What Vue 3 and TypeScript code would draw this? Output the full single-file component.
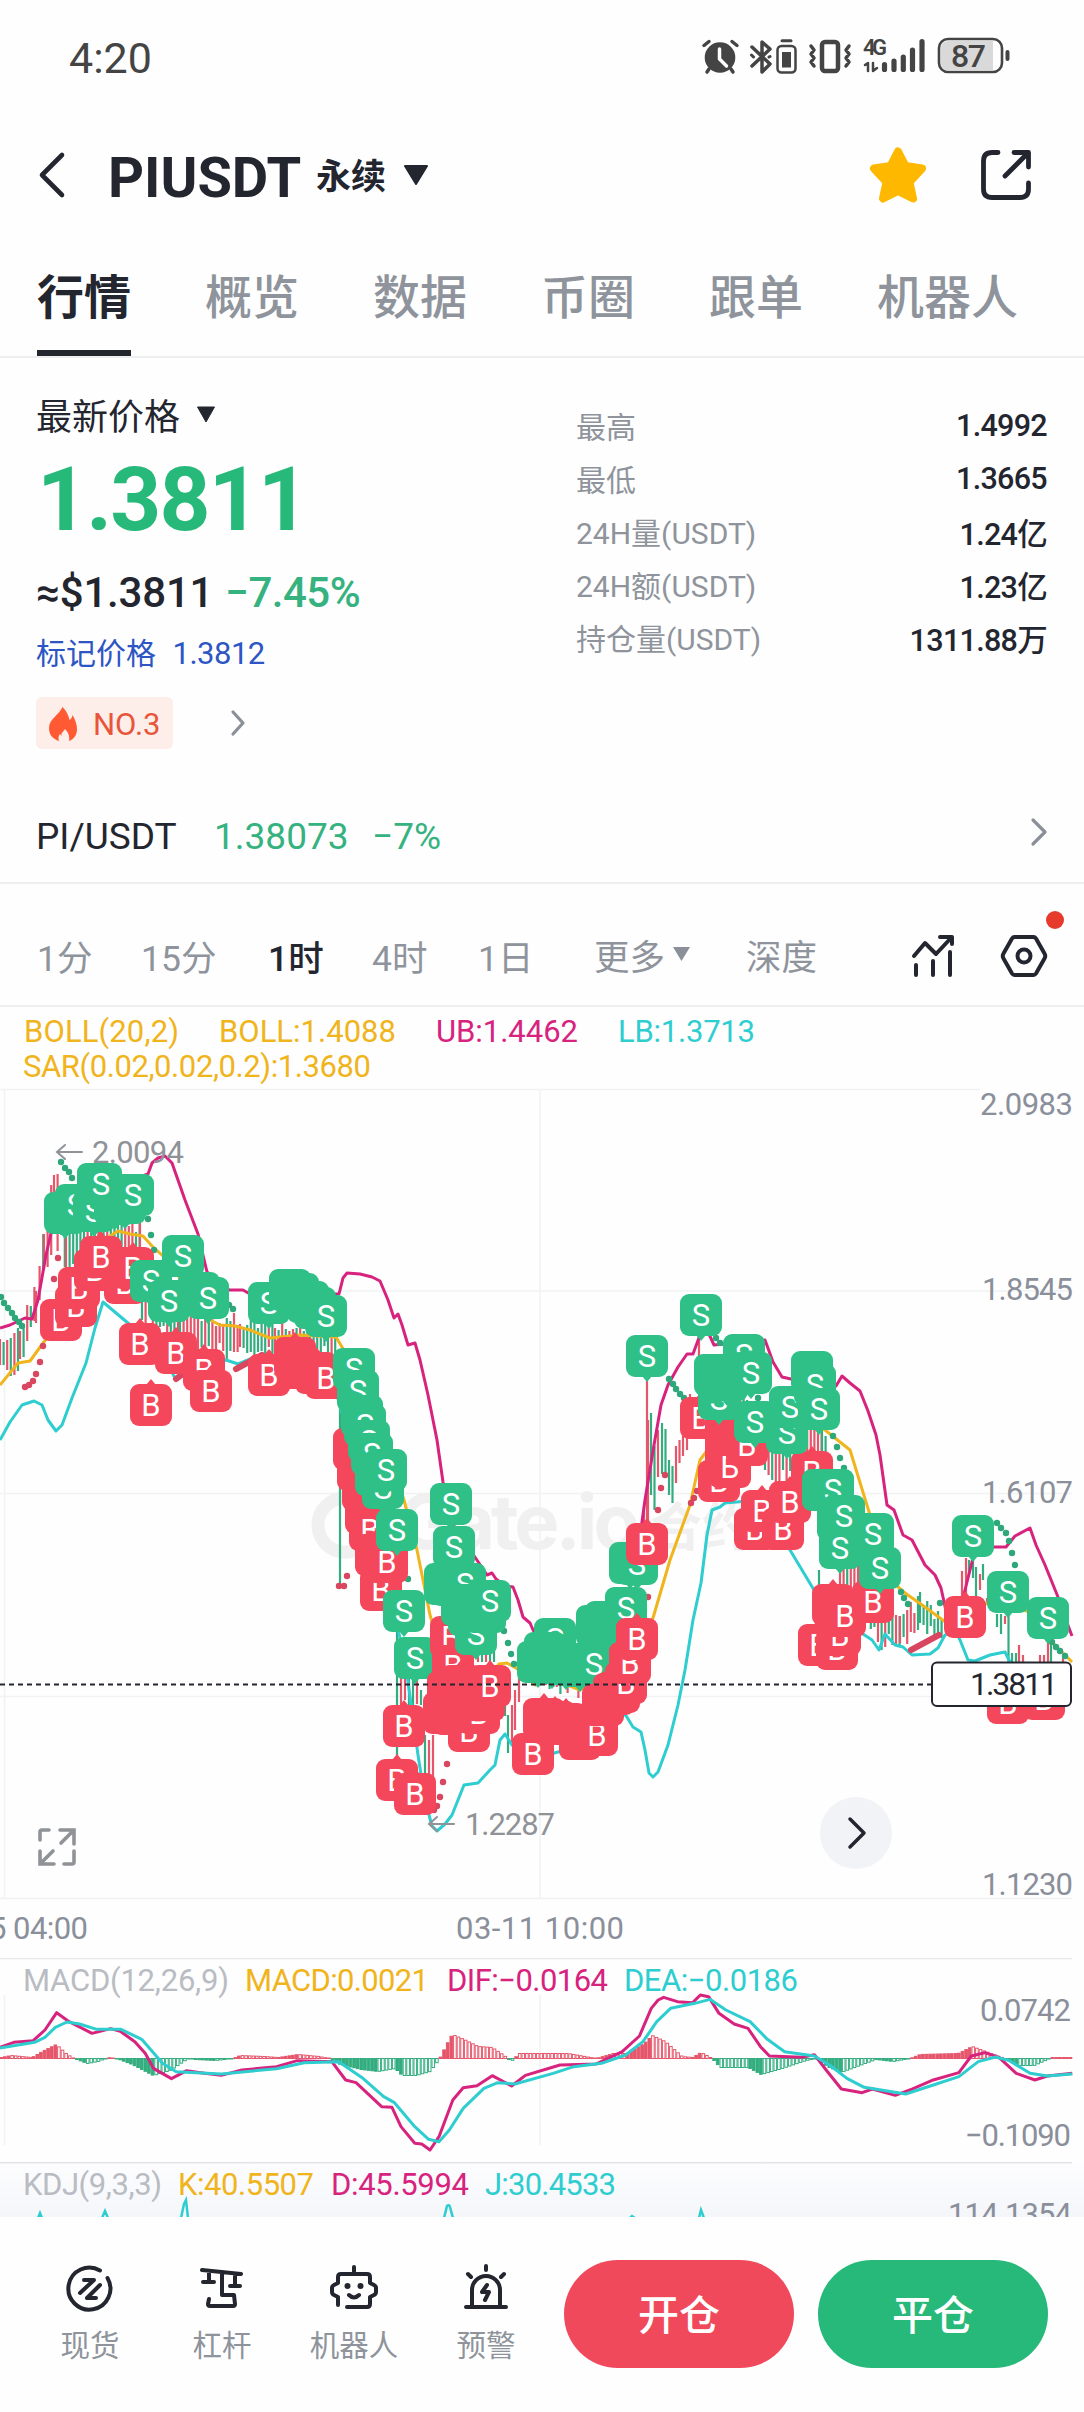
<template>
  <div class="page">
    <!-- 状态栏 -->
    <div class="status-bar">
      <span class="clock">4:20</span>
      <svg class="status-icons" viewBox="700 30 312 54" width="312" height="54">
        <g fill="none" stroke="#444" stroke-linecap="round" stroke-linejoin="round">
          <circle cx="720" cy="57.500" r="15.300" fill="#444" stroke="none" />
          <path d="M719.500 49v10l7 7" stroke="#fff" stroke-width="3.500" />
          <path d="M704 45.500l5-4M737 45.500l-5-4M709 69l-2 3M731 69l2 3" stroke-width="3.500" />
          <path d="M752 47l18 17-8 8V42l8 7-18 17" stroke-width="3.500" />
          <path d="M751.500 55l2 2M770 56.500l-1 .5" stroke-width="3" />
          <rect x="777.500" y="46" width="18" height="26.500" rx="4" stroke-width="2.500" />
          <rect x="782" y="52" width="9" height="15.500" fill="#444" stroke="none" />
          <path d="M782 40.800h9" stroke-width="3" />
          <rect x="822" y="42" width="16" height="29" rx="3" stroke-width="4.500" />
          <path d="M811 46l3 4-3 4 3 4-3 4 3 4M849 46l-3 4 3 4-3 4 3 4-3 4" stroke-width="3.500" />
          <path d="M868 71v-8l-3 2M873 63v8l4-3" stroke-width="2.500" />
          <path d="M884.500 64.500v5M894 61v8.500M903.300 57v12.500M912.500 50v19.500M922 41.500v28" stroke-width="5.200" />
          <rect x="939" y="39" width="63" height="33" rx="9" stroke-width="2.600" />
          <path d="M948 41h45v29.500h-45q-7 0-7-8v-13.500q0-8 7-8z" fill="#d9d9d9" stroke="none" />
          <path d="M1007.500 52v7" stroke-width="4" />
        </g>
        <text x="863" y="55" textLength="24" class="net-type">4G</text>
        <text x="951" y="67" textLength="35" class="battery">87</text>
      </svg>
    </div>

    <!-- 标题栏 -->
    <div class="nav-bar">
      <svg class="back" viewBox="0 0 30 48" width="30" height="48"><path d="M25 4L5 24l20 20" fill="none" stroke="#23262f" stroke-width="4.600" stroke-linecap="round" stroke-linejoin="round" /></svg>
      <h1>PIUSDT</h1>
      <span class="contract">永续</span>
      <svg class="tri-lg" viewBox="0 0 26 20" width="26" height="20"><path d="M2 1h22L13 19z" fill="#23262f" stroke="#23262f" stroke-width="2" stroke-linejoin="round" /></svg>
      <svg class="star" viewBox="0 0 58 56" width="58" height="56"><path d="M29 4.500l7.500 14.500 16.500 2.500-12.500 13.500 3.500 16.500-15-7.500-15 7.500 3.500-16.500L5 21.500 21.500 19z" fill="#ffb800" stroke="#ffb800" stroke-width="8" stroke-linejoin="round" /></svg>
      <svg class="share" viewBox="0 0 52 52" width="52" height="52"><path d="M18 3.500h-6q-8.500 0-8.500 8.500v28q0 8.500 8.500 8.500h28q8.500 0 8.500-8.500v-6M25 27L48 4M34 3.500h14.500V18" fill="none" stroke="#23262f" stroke-width="4.800" stroke-linecap="round" stroke-linejoin="round" /></svg>
    </div>

    <!-- 标签页 -->
    <div class="tabs">
      <div v-for="tab in tabs" :key="tab" :class="['tab', { active: tab === activeTab }]" @click="activeTab = tab">{{ tab }}</div>
    </div>

    <!-- 价格信息 -->
    <div class="summary">
      <div class="price-col">
        <div class="price-title">
          最新价格
          <svg viewBox="0 0 20 17" width="20" height="17"><path d="M1.500 1h17L10 16z" fill="#23262f" stroke="#23262f" stroke-linejoin="round" /></svg>
        </div>
        <div class="price">1.3811</div>
        <div class="price-usd"><span class="usd">≈$1.3811</span><span class="change">−7.45%</span></div>
        <div class="mark">标记价格 <span>1.3812</span></div>
        <div class="rank">
          <div class="badge">
            <svg viewBox="0 0 30 36" width="30" height="36"><path d="M14.500 1c4 4 6 8 7 13 2-1 2.500-3 3-5 3 5 4.500 10 4.500 14 0 6-3 10-8 12 1-5-1-9-4-12-1.500 3-4 3-3.500 7l-1.500-2c-1.500 2-2 4-1 7C5 33 1 29 1 22 1 13 11 9 14.500 1z" fill="#ff5a33" /></svg>
            <span>NO.3</span>
          </div>
          <svg viewBox="0 0 16 28" width="16" height="28"><path d="M3 3l10 11L3 25" fill="none" stroke="#8a8f98" stroke-width="3.200" stroke-linecap="round" stroke-linejoin="round" /></svg>
        </div>
      </div>
      <div class="stats">
        <div v-for="s in stats" :key="s.label" class="stat">
          <span class="stat-label">{{ s.label }}</span>
          <span class="stat-value">{{ s.value }}</span>
        </div>
      </div>
    </div>

    <div class="spot-row">
      <span class="pair">PI/USDT</span>
      <span class="spot-price">1.38073</span>
      <span class="spot-change">−7%</span>
      <svg viewBox="0 0 20 32" width="20" height="32"><path d="M4 4l12 12L4 28" fill="none" stroke="#8a8f98" stroke-width="3.200" stroke-linecap="round" stroke-linejoin="round" /></svg>
    </div>

    <!-- 周期选择 -->
    <div class="periods">
      <span class="period p1">1分</span>
      <span class="period p2">15分</span>
      <span class="period p3 active">1时</span>
      <span class="period p4">4时</span>
      <span class="period p5">1日</span>
      <span class="period p6">更多
        <svg viewBox="0 0 17 14" width="17" height="14"><path d="M0 0h17L8.500 14z" fill="#8a8f98" /></svg>
      </span>
      <span class="period p7">深度</span>
      <svg class="indicator" viewBox="0 0 44 44" width="44" height="44"><path d="M3 22L14 9l11 11L40 4M29 3h12v7M5 31v10M22 27v14M39 18v23" fill="none" stroke="#23262f" stroke-width="4" stroke-linecap="round" stroke-linejoin="round" /></svg>
      <div class="setting">
        <svg viewBox="0 0 48 44" width="48" height="44"><path d="M14.500 3h19q1.500 0 2.500 1.500l8.500 15q1.500 2.500 0 5l-8.500 15q-1 1.500-2.500 1.500h-19q-1.500 0-2.500-1.500l-8.500-15q-1.500-2.500 0-5l8.500-15q1-1.500 2.500-1.500z" fill="none" stroke="#23262f" stroke-width="4" /><circle cx="24" cy="22" r="6.500" fill="none" stroke="#23262f" stroke-width="4" /></svg>
        <i class="dot"></i>
      </div>
    </div>

    <!-- K线主图 -->
    <svg class="panel" viewBox="0 1007 1084 951" width="1084" height="951">
      <text v-for="t in mainLegend" :key="t.text" :x="t.x" :y="t.y" :textLength="t.w" :fill="t.color" class="legend">{{ t.text }}</text>
      <path d="M0 1089.500h980M0 1291h1072M0 1493.500h1072M0 1696.500h1072M0 1898.500h1072M4.500 1089v810M540 1089v810" class="grid" />

      <!-- 水印 -->
      <g class="watermark">
        <circle cx="345" cy="1525" r="27" fill="none" stroke="#f0f0f0" stroke-width="13" />
        <text x="398" y="1549" textLength="242" font-size="76">Gate.io</text>
        <text x="650" y="1546" textLength="104" font-size="52">合约</text>
      </g>

      <path v-for="(c, i) in candles" :key="'c' + i" :d="`M${c[0]} ${c[1]}V${c[2]}`" :stroke="c[3] ? GREEN : RED" stroke-width="2.200" />
      <polyline :points="lower" :stroke="CYAN" class="line" />
      <polyline :points="middle" :stroke="YELLOW" class="line" />
      <polyline :points="upper" :stroke="PINK" class="line" />
      <circle v-for="(d, i) in sarDown" :key="'d' + i" :cx="d[0]" :cy="d[1]" r="3.200" fill="#2ea77b" />
      <circle v-for="(d, i) in sarUp" :key="'u' + i" :cx="d[0]" :cy="d[1]" r="3.200" fill="#d8475f" />
      <path d="M236 1369L262 1355M176 1379l8-6M911 1650l28-15" stroke="#d8475f" stroke-width="6" stroke-linecap="round" />
      <g class="extreme">
        <path d="M82 1152H58M65 1145l-8 7 8 7M454 1824h-24M437 1817l-8 7 8 7" />
        <text x="92" y="1163" textLength="92">2.0094</text>
        <text x="465" y="1835" textLength="90">1.2287</text>
      </g>
      <!-- 买卖点 -->
      <g v-for="(m, i) in markers" :key="'m' + i" :fill="isSell(m) ? SELL : BUY">
        <path :d="isSell(m) ? `M${m[1] - 5} ${m[2] + 20}h10l-5 6z` : `M${m[1] - 5} ${m[2] - 20}h10l-5-6z`" />
        <rect :x="m[1] - 21" :y="m[2] - 21" width="42" height="42" rx="9" />
        <text v-if="m[0] === 'S' || m[0] === 'B'" :x="m[1]" :y="m[2] + 11" class="marker">{{ m[0] }}</text>
      </g>
      <path d="M0 1684.500H931" stroke="#23262f" stroke-width="1.800" stroke-dasharray="5 4" />
      <rect x="932" y="1662.500" width="139" height="43.500" rx="5" fill="#fff" stroke="#23262f" stroke-width="2" />
      <text x="970" y="1695" textLength="88" class="cur">1.3811</text>

      <text v-for="t in scale" :key="t.text" :x="1073 - t.w" :y="t.y" :textLength="t.w" class="axis">{{ t.text }}</text>
      <text x="-11" y="1939" textLength="99" class="axis">5 04:00</text>
      <text x="456" y="1939" textLength="168" class="axis">03-11 10:00</text>
      <path d="M40 1840v-8q0-2 2-2h7M60 1830h14v14M73 1831l-12 12M40 1851v13h14M41 1863l12-12M74 1851v11q0 2-2 2h-8" class="expand" />
      <circle cx="856" cy="1833" r="36" fill="#f1f3f7" />
      <path d="M850 1819l14 14-14 14" fill="none" stroke="#23262f" stroke-width="3.500" stroke-linecap="round" stroke-linejoin="round" />
    </svg>

    <!-- MACD -->
    <svg class="panel" viewBox="0 1958 1084 204" width="1084" height="204">
      <path d="M0 1958.500h1072" stroke="#e6e7ea" stroke-width="1.500" />
      <path d="M4.500 1995v150M540 1995v150" class="grid" />
      <text v-for="t in macdLegend" :key="t.text" :x="t.x" y="1991" :textLength="t.w" :fill="t.color" class="legend">{{ t.text }}</text>
      <path d="M0 2058.500h1072" stroke="#e58a98" stroke-width=".8" />
      <rect v-for="(b, i) in bars" :key="i" :x="b.x" :y="b.y" :width="2.600" :height="b.h" :stroke="b.up ? RED : GREEN" :fill="b.solid ? (b.up ? RED : GREEN) : '#fff'" />
      <g transform="translate(0 1950) scale(.69133 .33333)">
        <polyline :points="dif" :stroke="PINK" class="line" />
        <polyline :points="dea" :stroke="CYAN" class="line" />
      </g>
      <text x="980" y="2021" textLength="91" class="axis">0.0742</text>
      <text x="965" y="2146" textLength="106" class="axis">−0.1090</text>
    </svg>

    <!-- KDJ -->
    <svg class="panel kdj" viewBox="0 2162 1084 55" width="1084" height="55">
      <path d="M0 2162.700h1072" stroke="#e1e3e6" stroke-width="1.500" />
      <text v-for="t in kdjLegend" :key="t.text" :x="t.x" y="2195" :textLength="t.w" :fill="t.color" class="legend">{{ t.text }}</text>
      <path d="M38 2218l2-5 2 5M102 2218l3-7 3 7M181 2218l3-14 2-4 2 18M444 2218l3-12q2-2 3 1l3 11M630 2218l2-2 3 2M699 2218l2-8 3 8" fill="none" :stroke="CYAN" stroke-width="2.500" />
      <text x="948" y="2225" textLength="124" class="axis">114.1354</text>
    </svg>

    <!-- 底部操作栏 -->
    <div class="bottom-bar">
      <div class="action">
        <svg viewBox="0 0 48 48" width="48" height="48"><path d="M34 5.500A21 21 0 1 0 41.500 13M18 15h10L14 28M34 20L21 33h9" transform="translate(0 1)" /></svg>
        现货
      </div>
      <div class="action">
        <svg viewBox="0 0 48 48" width="48" height="48"><path d="M4 6l39 4M11 7v11M5 18h11M24 8v23h12l1 9q0 2-2 2H12q-2 0-2-2l1-5M37 10v12M32 22h10" /></svg>
        杠杆
      </div>
      <div class="action">
        <svg viewBox="0 0 48 48" width="48" height="48"><path d="M24 3v7M8 41v-8l-4-2q-2-1-2-3v-4q0-2 2-3l4-2v-6q0-3 3-3h26q3 0 3 3v6l4 2q2 1 2 3v4q0 2-2 3l-4 2v7q0 3-3 3H17M19 31q5 5 10 0" /><circle cx="17.500" cy="22" r="3" /><circle cx="30.500" cy="22" r="3" /></svg>
        机器人
      </div>
      <div class="action">
        <svg viewBox="0 0 48 48" width="48" height="48"><path d="M4 43h40M10 43V26a14 14 0 0 1 28 0v17M24 2v4M6 10l3 3M42 10l-3 3M25 21l-5 7h7l-4 8" /></svg>
        预警
      </div>
      <button class="trade open">开仓</button>
      <button class="trade close">平仓</button>
    </div>
  </div>
</template>

<script setup lang="ts">
import { ref } from 'vue';

const RED = '#e5566b';
const GREEN = '#33ad7f';
const SELL = '#2fc088';
const BUY = '#f5475c';
const PINK = '#d7237e';
const CYAN = '#2ecdd0';
const YELLOW = '#f0b41c';
const GRAY = '#b9bcc3';

interface Label {
  text: string;
  x: number;
  y?: number;
  w: number;
  color: string;
}

// 小写表示被遮挡、不显示字母的标记
type Marker = ['S' | 'B' | 's' | 'b', number, number];
type Candle = [number, number, number, number];

const tabs = ['行情', '概览', '数据', '币圈', '跟单', '机器人'];
const activeTab = ref('行情');

const stats = [
  { label: '最高', value: '1.4992' },
  { label: '最低', value: '1.3665' },
  { label: '24H量(USDT)', value: '1.24亿' },
  { label: '24H额(USDT)', value: '1.23亿' },
  { label: '持仓量(USDT)', value: '1311.88万' }
];

const mainLegend: Label[] = [
  { text: 'BOLL(20,2)', x: 24, y: 1042, w: 155, color: YELLOW },
  { text: 'BOLL:1.4088', x: 219, y: 1042, w: 177, color: YELLOW },
  { text: 'UB:1.4462', x: 436, y: 1042, w: 142, color: PINK },
  { text: 'LB:1.3713', x: 618, y: 1042, w: 137, color: CYAN },
  { text: 'SAR(0.02,0.02,0.2):1.3680', x: 23, y: 1077, w: 348, color: YELLOW }
];

const macdLegend: Label[] = [
  { text: 'MACD(12,26,9)', x: 23, w: 206, color: GRAY },
  { text: 'MACD:0.0021', x: 245, w: 184, color: YELLOW },
  { text: 'DIF:−0.0164', x: 447, w: 161, color: PINK },
  { text: 'DEA:−0.0186', x: 624, w: 174, color: CYAN }
];

const kdjLegend: Label[] = [
  { text: 'KDJ(9,3,3)', x: 23, w: 139, color: GRAY },
  { text: 'K:40.5507', x: 178, w: 136, color: YELLOW },
  { text: 'D:45.5994', x: 331, w: 138, color: PINK },
  { text: 'J:30.4533', x: 485, w: 131, color: CYAN }
];

const scale = [
  { text: '2.0983', y: 1115, w: 93 },
  { text: '1.8545', y: 1300, w: 91 },
  { text: '1.6107', y: 1503, w: 91 },
  { text: '1.1230', y: 1895, w: 91 }
];

// 布林带
const upper = '0,1328 10,1325 25,1318 32,1319 38,1300 46,1255 54,1220 90,1195 148,1174 152,1163 158,1158 165,1156 172,1163 185,1200 198,1234 207,1272 229,1290 243,1290 250,1294 339,1294 343,1278 347,1273 360,1274 372,1277 380,1281 388,1300 394,1318 398,1314 402,1325 408,1345 415,1343 420,1360 428,1395 437,1440 443,1482 450,1520 487,1575 492,1573 496,1579 505,1586 513,1587 518,1600 523,1617 530,1623 534,1632 600,1640 634,1580 645,1500 654,1445 661,1405 668,1385 678,1367 687,1354 693,1354 700,1335 708,1332 714,1345 765,1340 773,1362 782,1377 791,1379 836,1386 842,1376 850,1383 860,1391 868,1411 876,1435 880,1455 887,1505 894,1510 903,1535 912,1540 925,1565 935,1575 941,1588 948,1620 960,1610 975,1550 994,1547 1006,1547 1015,1536 1030,1528 1036,1545 1045,1565 1058,1597 1066,1620 1072,1636';
const middle = '0,1385 18,1363 30,1361 38,1350 60,1320 110,1236 118,1231 130,1234 143,1236 152,1246 163,1256 185,1285 212,1321 220,1325 235,1326 250,1330 270,1338 300,1335 336,1337 345,1352 370,1400 404,1500 417,1550 430,1615 450,1680 480,1690 499,1664 507,1663 516,1668 535,1685 555,1680 580,1690 610,1670 653,1618 670,1560 690,1505 700,1460 730,1420 800,1410 850,1450 890,1580 905,1593 925,1607 944,1621 970,1610 990,1602 1027,1611 1050,1640 1072,1662';
const lower = '0,1440 10,1422 22,1405 34,1401 42,1405 48,1420 56,1431 62,1425 72,1398 86,1363 95,1328 103,1302 160,1350 175,1378 190,1372 226,1360 238,1364 260,1355 330,1370 380,1550 405,1660 418,1755 425,1800 432,1826 437,1831 445,1824 452,1815 458,1800 464,1785 478,1783 490,1770 495,1765 500,1740 505,1734 512,1745 530,1760 600,1740 625,1714 633,1727 641,1732 645,1750 649,1773 653,1777 658,1772 668,1745 678,1705 685,1670 693,1620 701,1583 707,1535 712,1510 720,1507 725,1503 760,1500 820,1600 863,1634 872,1640 879,1650 885,1634 895,1645 903,1647 912,1655 930,1654 938,1648 945,1635 955,1630 960,1640 968,1660 975,1661 990,1655 1005,1652 1010,1662';

// 抛物线指标
const sarDown = [
  [1, 1297], [4, 1303], [8, 1308], [12, 1313], [15, 1318], [19, 1322], [22, 1326],
  [61, 1162], [65, 1168], [69, 1172], [72, 1178], [148, 1219], [151, 1235], [154, 1250],
  [229, 1305], [233, 1309], [408, 1579], [504, 1631], [508, 1643], [511, 1654], [514, 1664],
  [669, 1379], [673, 1384], [676, 1389], [680, 1394], [684, 1398], [716, 1338], [720, 1343],
  [758, 1398], [833, 1436], [837, 1447], [840, 1458], [844, 1468], [901, 1592], [904, 1598],
  [908, 1604], [940, 1603], [997, 1523], [1001, 1528], [1006, 1533], [1009, 1541],
  [1012, 1553], [1015, 1565], [1052, 1642], [1056, 1647], [1060, 1651], [1065, 1656]
];
const sarUp = [
  [25, 1387], [29, 1385], [33, 1381], [36, 1374], [40, 1362], [43, 1346], [54, 1279],
  [58, 1258], [339, 1586], [344, 1586], [347, 1576], [434, 1810], [437, 1806], [440, 1797],
  [443, 1782], [447, 1764], [648, 1597], [658, 1510], [661, 1488], [665, 1475],
  [691, 1503], [694, 1498], [697, 1491]
];

// 走势中线与波幅: [x, y, 半幅]
const trend = [
  [0, 1358, 22], [20, 1345, 24], [36, 1305, 18], [44, 1250, 36], [54, 1200, 42],
  [66, 1235, 32], [100, 1240, 28], [140, 1240, 24], [142, 1300, 24], [180, 1320, 24],
  [216, 1338, 20], [240, 1336, 18], [275, 1340, 22], [310, 1340, 16], [338, 1345, 13]
];
const trend2 = [
  [546, 1676, 18], [604, 1672, 18]
];
const trend3 = [
  [740, 1400, 12], [765, 1450, 30], [800, 1455, 26], [822, 1440, 22], [840, 1560, 32],
  [860, 1575, 28], [878, 1625, 24], [900, 1630, 17], [920, 1612, 17], [944, 1628, 12]
];

function buildCandles(path: number[][], seed: number): Candle[] {
  const out: Candle[] = [];
  let s = seed;
  const rnd = () => {
    s = (s * 16807) % 2147483647;
    return s / 2147483647;
  };
  for (let i = 1; i < path.length; i++) {
    const [x0, y0, r0] = path[i - 1];
    const [x1, y1, r1] = path[i];
    for (let x = x0; x < x1; x += 3.6) {
      const k = (x - x0) / (x1 - x0);
      const y = y0 + (y1 - y0) * k + (rnd() - 0.5) * 12;
      const r = (r0 + (r1 - r0) * k) * (0.5 + rnd() * 0.6);
      out.push([+x.toFixed(1), Math.round(y - r), Math.round(y + r), rnd() > 0.5 ? 1 : 0]);
    }
  }
  return out;
}

const candles: Candle[] = [
  ...buildCandles(trend, 77),
  ...buildCandles(trend2, 12),
  ...buildCandles(trend3, 35),
  [340, 1400, 1585, 1], [397, 1630, 1755, 1], [401, 1670, 1705, 0], [405, 1670, 1700, 0],
  [409, 1670, 1712, 1], [413, 1670, 1715, 1], [417, 1680, 1704, 0], [421, 1690, 1705, 1],
  [425, 1735, 1775, 1], [429, 1740, 1775, 0], [433, 1735, 1780, 0], [478, 1655, 1662, 0],
  [482, 1654, 1662, 1], [486, 1654, 1662, 0], [490, 1652, 1662, 1], [494, 1645, 1662, 1],
  [505, 1700, 1716, 1], [508, 1715, 1753, 1], [512, 1705, 1742, 0], [515, 1690, 1730, 0], [519, 1678, 1702, 0],
  [644, 1505, 1530, 0], [647, 1380, 1525, 0], [648, 1420, 1525, 0], [651, 1413, 1495, 1], [654.5, 1446, 1510, 1],
  [658, 1430, 1477, 0], [662, 1423, 1474, 1], [665.5, 1429, 1472, 1], [669, 1460, 1495, 1],
  [672.5, 1466, 1503, 1], [676, 1446, 1483, 0], [679.5, 1440, 1463, 0], [683, 1432, 1456, 0],
  [687, 1420, 1450, 0], [690, 1394, 1425, 0], [699, 1336, 1360, 0], [819, 1570, 1592, 1],
  [962, 1571, 1600, 0], [966, 1558, 1598, 0], [969, 1560, 1575, 1], [973, 1560, 1578, 1],
  [976, 1567, 1596, 1], [980, 1574, 1590, 0], [983, 1564, 1580, 1], [987, 1598, 1604, 0],
  [997, 1614, 1627, 1], [1001, 1614, 1634, 1], [1005, 1616, 1624, 0], [1008.5, 1610, 1663, 1],
  [1012, 1653, 1663, 1], [1016, 1653, 1663, 1], [1019, 1645, 1663, 0], [1023, 1655, 1663, 0],
  [1040, 1655, 1663, 0], [1044, 1655, 1663, 0], [1048, 1642, 1663, 0], [1051, 1642, 1663, 1], [1063, 1658, 1663, 0]
];

// 买卖标记，后绘制的覆盖在上层
const markers: Marker[] = [
  ['B', 61, 1320], ['B', 76, 1306], ['B', 79, 1288], ['B', 95, 1270], ['B', 125, 1283], ['B', 133, 1268], ['B', 101, 1257],
  ['s', 65, 1213], ['S', 76, 1205], ['S', 94, 1211], ['s', 115, 1204], ['s', 98, 1184], ['s', 125, 1203], ['S', 101, 1184], ['S', 133, 1195],
  ['B', 140, 1344], ['B', 151, 1405], ['B', 176, 1353], ['B', 204, 1370], ['B', 211, 1391],
  ['S', 151, 1281], ['S', 183, 1256], ['s', 199, 1293], ['S', 169, 1301], ['S', 208, 1298],
  ['B', 269, 1375], ['b', 295, 1358], ['b', 300, 1368], ['b', 316, 1373], ['B', 326, 1378],
  ['S', 269, 1303], ['s', 290, 1290], ['s', 298, 1294], ['s', 308, 1302], ['s', 315, 1308], ['S', 326, 1316],
  ['b', 354, 1449], ['b', 358, 1470], ['b', 363, 1490], ['b', 366, 1513], ['B', 370, 1530],
  ['b', 376, 1555], ['B', 381, 1590], ['B', 387, 1562],
  ['S', 354, 1369], ['S', 358, 1391], ['s', 362, 1416], ['S', 365, 1425], ['S', 369, 1441], ['S', 372, 1454],
  ['s', 376, 1475], ['S', 383, 1488], ['S', 386, 1470], ['S', 397, 1530],
  ['S', 404, 1611], ['S', 415, 1658], ['B', 404, 1726], ['B', 397, 1780], ['B', 415, 1794],
  ['B', 451, 1637], ['B', 453, 1666], ['B', 461, 1686], ['b', 448, 1692], ['b', 444, 1713], ['b', 453, 1714],
  ['B', 469, 1731], ['b', 465, 1712], ['b', 474, 1700], ['B', 479, 1713], ['b', 484, 1700], ['B', 490, 1686],
  ['S', 451, 1504], ['S', 454, 1547], ['s', 445, 1584], ['s', 452, 1585], ['S', 465, 1584], ['s', 462, 1605],
  ['s', 469, 1615], ['S', 476, 1634], ['s', 485, 1612], ['S', 490, 1601],
  ['b', 544, 1719], ['B', 533, 1754], ['b', 555, 1722], ['b', 566, 1724], ['b', 580, 1739], ['b', 588, 1730], ['B', 597, 1735],
  ['S', 555, 1639], ['s', 545, 1653], ['s', 538, 1662], ['s', 552, 1663], ['s', 566, 1664], ['s', 580, 1666],
  ['s', 597, 1626], ['s', 606, 1622], ['S', 626, 1608], ['s', 606, 1645], ['S', 594, 1664],
  ['s', 630, 1563], ['S', 637, 1564], ['B', 647, 1544],
  ['b', 603, 1705], ['b', 614, 1694], ['b', 619, 1692], ['B', 626, 1683], ['B', 630, 1663], ['B', 637, 1639],
  ['S', 647, 1356], ['B', 701, 1418], ['b', 726, 1433], ['B', 719, 1481], ['b', 726, 1456], ['B', 730, 1467], ['B', 747, 1445],
  ['S', 701, 1315], ['s', 715, 1375], ['S', 719, 1399], ['s', 727, 1380], ['S', 744, 1355], ['S', 751, 1373],
  ['B', 755, 1529], ['B', 762, 1511], ['B', 783, 1529], ['B', 790, 1502], ['B', 812, 1472],
  ['S', 755, 1422], ['S', 787, 1433], ['S', 790, 1407], ['s', 812, 1372], ['S', 815, 1385], ['S', 819, 1409],
  ['B', 819, 1645], ['b', 833, 1605], ['B', 837, 1649], ['B', 840, 1635], ['B', 845, 1616], ['B', 873, 1602],
  ['s', 823, 1490], ['S', 833, 1490], ['s', 838, 1520], ['S', 873, 1534], ['S', 844, 1516], ['S', 840, 1548], ['S', 880, 1568],
  ['S', 973, 1536], ['B', 965, 1617], ['S', 1008, 1592], ['S', 1048, 1618], ['B', 1008, 1703], ['B', 1044, 1699]
];

const isSell = (m: Marker) => m[0].toUpperCase() === 'S';

const dif = '0,292 20,277 48,272 65,240 82,188 100,215 133,250 160,236 175,245 195,275 210,310 222,355 248,386 270,362 290,368 320,376 350,360 400,350 430,332 480,335 500,390 515,398 552,470 567,472 580,530 600,580 610,582 622,600 635,560 655,450 670,413 690,407 712,377 740,408 760,376 810,345 862,342 900,305 925,258 942,175 952,150 960,142 980,155 1002,158 1013,135 1025,140 1040,190 1062,222 1082,235 1100,290 1113,318 1160,322 1178,314 1195,360 1217,417 1247,428 1262,417 1295,436 1320,417 1350,390 1387,368 1405,318 1425,308 1445,322 1470,370 1497,390 1515,378 1551,370';
const dea = '0,294 50,277 65,262 80,232 97,216 115,222 140,238 175,238 205,268 235,340 255,365 320,372 400,356 440,338 490,335 525,385 555,440 570,457 600,530 620,568 635,575 650,540 670,475 700,415 720,398 745,402 800,370 830,350 870,340 905,315 930,275 950,215 970,175 1005,160 1027,148 1050,180 1085,215 1110,268 1135,305 1178,318 1200,345 1225,385 1250,412 1310,432 1350,405 1387,380 1415,335 1440,321 1460,332 1490,370 1515,378 1551,372';

// MACD 柱高包络
const hist = [
  [0, 1], [10, 3], [31, 1], [41, 7], [55, 14], [66, 4], [73, 0], [86, -5], [97, -3], [107, 1], [118, -1],
  [131, -6], [152, -17], [169, -12], [187, 0], [194, -1], [214, -2], [232, 0], [239, 3], [263, 2], [277, 1],
  [297, 4], [318, 2], [328, 0], [339, -6], [360, -11], [377, -13], [394, -10], [401, -17], [415, -17],
  [429, -13], [438, -1], [446, 15], [451, 24], [463, 19], [477, 12], [491, 11], [503, 3], [510, -3], [518, 5],
  [567, 5], [595, 0], [612, 5], [626, 5], [643, 15], [651, 23], [664, 17], [681, 2], [691, 1], [700, 6],
  [711, 0], [719, -9], [747, -9], [760, -16], [781, -10], [805, -2], [816, 0], [826, -8], [840, -14],
  [864, -5], [875, -1], [892, -3], [909, 0], [919, 4], [957, 5], [971, 12], [995, 3], [1004, 0], [1016, -7],
  [1033, -7], [1051, 1], [1072, 1]
];

const bars = Array.from({ length: 298 }, (_, i) => i * 3.6).map((x) => {
  const n = Math.max(1, hist.findIndex((p) => p[0] > x));
  const [x0, v0] = hist[n - 1];
  const [x1, v1] = hist[n];
  const v = v0 + ((v1 - v0) * (x - x0)) / (x1 - x0);
  const up = v >= 0;
  const h = Math.max(0.5, Math.abs(v));
  return { x, y: up ? 2058.5 - h : 2058.5, h, up, solid: up ? v1 > v0 : v1 < v0 };
});
</script>

<style>
body {
  background: #fff;
}
</style>

<style scoped>
.page {
  width: 1084px;
  height: 2412px;
  overflow: hidden;
  background: #fefefe;
  color: #23262f;
  font-family: Roboto, "Noto Sans CJK SC", sans-serif;
  white-space: nowrap;
}

.page svg {
  flex: none;
}

.status-bar {
  display: flex;
  align-items: center;
  justify-content: space-between;
  height: 114px;
  padding: 0 72px 0 69px;
  box-sizing: border-box;
}

.clock {
  padding-top: 2px;
  font-size: 43px;
  color: #444;
}

.net-type {
  font-size: 22px;
  font-weight: 600;
  fill: #444;
}

.battery {
  font-size: 32px;
  font-weight: 500;
  fill: #444;
}

.nav-bar {
  display: flex;
  align-items: center;
  height: 122px;
  padding: 0 52px 0 37px;
}

.nav-bar h1 {
  width: 208px;
  margin: 6px 0 0 41px;
  font-size: 56px;
  font-weight: 700;
}

.contract {
  width: 87px;
  margin-top: -4px;
  font-size: 35px;
  font-weight: 700;
}

.star {
  margin-left: auto;
  margin-right: 53px;
}

.tabs {
  display: flex;
  gap: 74px;
  height: 122px;
  padding-left: 37px;
  box-sizing: border-box;
  border-bottom: 2px solid #eeeff1;
}

.tab {
  line-height: 124px;
  height: 120px;
  box-sizing: border-box;
  font-size: 47px;
  font-weight: 500;
  color: #8f949c;
}

.tab.active {
  color: #23262f;
  font-weight: 700;
  border-bottom: 6px solid #23262f;
}

.summary {
  display: flex;
  justify-content: space-between;
  height: 430px;
  padding: 32px 37px 0 36px;
  box-sizing: border-box;
}

.price-title {
  display: flex;
  align-items: center;
  gap: 16px;
  height: 54px;
  margin-top: -3px;
  font-size: 36px;
}

.price {
  height: 115px;
  line-height: 118px;
  padding-left: 1px;
  font-size: 89px;
  font-weight: 700;
  letter-spacing: -1.8px;
  color: #26b97a;
}

.price-usd {
  display: flex;
  align-items: center;
  gap: 12px;
  height: 72px;
  font-size: 42px;
  font-weight: 500;
}

.usd {
  letter-spacing: -0.200px;
}

.change,
.spot-price,
.spot-change {
  color: #35b27f;
}

.change {
  letter-spacing: -0.500px;
}

.mark {
  height: 50px;
  line-height: 52px;
  font-size: 30px;
  color: #2d55c4;
}

.mark span {
  margin-left: 9px;
  font-size: 31px;
  letter-spacing: -0.500px;
}

.rank {
  display: flex;
  align-items: center;
  gap: 57px;
  margin-top: 19px;
}

.badge {
  display: flex;
  align-items: center;
  gap: 15px;
  width: 137px;
  height: 52px;
  padding: 2px 0 0 12px;
  box-sizing: border-box;
  border-radius: 6px;
  background: #fdeee9;
  font-size: 31px;
  color: #e8553a;
}

.stats {
  width: 471px;
  padding-top: 8px;
}

.stat {
  display: flex;
  justify-content: space-between;
  align-items: center;
  height: 53px;
}

.stat-label {
  font-size: 30px;
  color: #8f949c;
}

.stat-value {
  padding-top: 2px;
  font-size: 30.500px;
  font-weight: 500;
  letter-spacing: -0.700px;
}

.spot-row {
  display: flex;
  align-items: center;
  height: 96px;
  padding: 2px 35px 0 36px;
  box-sizing: border-box;
  border-bottom: 2px solid #eeeff1;
  font-size: 37px;
}

.pair {
  width: 178px;
}

.spot-price {
  width: 158px;
}

.spot-row svg {
  margin: -8px 0 0 auto;
}

.periods {
  display: flex;
  align-items: center;
  height: 123px;
  padding: 22px 36px 0 37px;
  box-sizing: border-box;
  border-bottom: 2px solid #eeeff1;
}

.period {
  font-size: 35.500px;
  color: #8f949c;
}

.period.active {
  color: #23262f;
  font-weight: 500;
}

.p1 {
  width: 104px;
}

.p2 {
  width: 127px;
}

.p3 {
  width: 104px;
}

.p4 {
  width: 106px;
}

.p5 {
  width: 116px;
}

.p6 {
  display: flex;
  align-items: center;
  gap: 8px;
  width: 152px;
  margin-top: -3px;
}

.p7 {
  width: 165px;
  margin-top: -3px;
}

.setting {
  position: relative;
  height: 44px;
  margin-left: auto;
}

.dot {
  position: absolute;
  top: -23px;
  right: -16px;
  width: 18px;
  height: 18px;
  border-radius: 50%;
  background: #e53a2c;
}

.panel {
  display: block;
  overflow: hidden;
}

.kdj {
  background: linear-gradient(#fdfdfe, #f4f6fa);
}

.legend,
.axis {
  font-size: 31px;
}

.axis {
  fill: #8a8f9a;
}

.grid {
  fill: none;
  stroke: #f1f2f4;
  stroke-width: 1.5;
}

.watermark {
  fill: #f0f0f0;
  font-family: Inter, "Noto Sans CJK SC", sans-serif;
  font-weight: 700;
}

.line {
  fill: none;
  stroke-width: 3;
  stroke-linejoin: round;
  vector-effect: non-scaling-stroke;
}

.extreme {
  font-size: 31px;
  fill: #8f9296;
}

.extreme path,
.expand {
  fill: none;
  stroke: #8f9296;
  stroke-width: 2;
  stroke-linecap: round;
}

.expand {
  stroke-width: 3.6;
}

.marker {
  font-size: 31px;
  fill: #fff;
  text-anchor: middle;
}

.cur {
  font-size: 32px;
  fill: #23262f;
}

.bottom-bar {
  display: flex;
  align-items: flex-start;
  padding: 43px 36px 0 24px;
}

.action {
  display: flex;
  flex-direction: column;
  align-items: center;
  width: 132px;
  padding-top: 4px;
  font-size: 29.500px;
  line-height: 44px;
  color: #8f949c;
}

.action svg {
  margin-bottom: 12px;
  fill: none;
  stroke: #23262f;
  stroke-width: 4;
  stroke-linecap: round;
  stroke-linejoin: round;
}

.action circle {
  fill: #23262f;
  stroke: none;
}

.trade {
  width: 230px;
  height: 108px;
  padding: 0 0 4px;
  border: none;
  border-radius: 54px;
  font-family: inherit;
  font-size: 41px;
  font-weight: 500;
  color: #fff;
}

.open {
  margin-left: 12px;
  background: #f1495c;
}

.close {
  margin-left: 24px;
  background: #26b97a;
}
</style>
